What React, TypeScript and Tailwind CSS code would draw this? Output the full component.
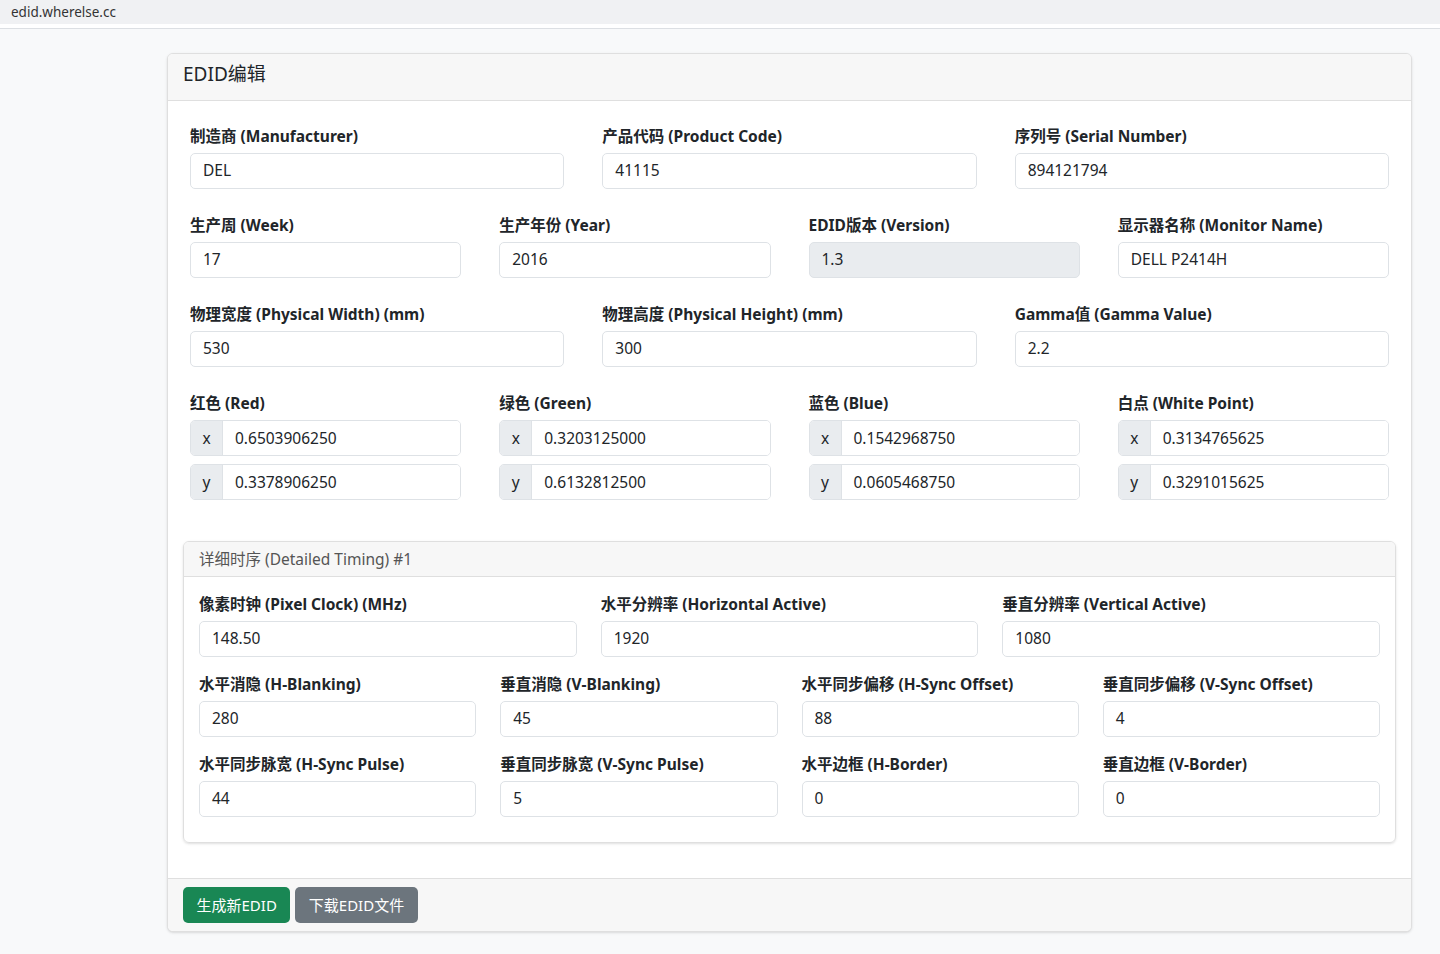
import React from "react";

const FONT = { fontFamily: '"Noto Sans", "Noto Sans CJK SC", sans-serif' };

function Field({ label, value, disabled }: { label: string; value: string; disabled?: boolean }) {
  return (
    <div className="flex flex-col">
      <div className="text-[15.5px] font-bold leading-[24px] mb-[5px] text-[#212529] whitespace-nowrap">{label}</div>
      <div
        className={`h-[36px] border border-[#dee2e6] rounded-[5px] px-3 flex items-center text-[15.5px] text-[#212529] ${
          disabled ? "bg-[#e9ecef]" : "bg-white"
        }`}
      >
        {value}
      </div>
    </div>
  );
}

function XY({ label, x, y }: { label: string; x: string; y: string }) {
  const Row = ({ k, v }: { k: string; v: string }) => (
    <div className="flex h-[36px] border border-[#dee2e6] rounded-[5px] overflow-hidden text-[15.5px] text-[#212529]">
      <div className="w-[32px] bg-[#e9ecef] border-r border-[#dee2e6] flex items-center justify-center">{k}</div>
      <div className="flex-1 bg-white px-3 flex items-center">{v}</div>
    </div>
  );
  return (
    <div className="flex flex-col">
      <div className="text-[15.5px] font-bold leading-[24px] mb-[5px] text-[#212529] whitespace-nowrap">{label}</div>
      <div className="flex flex-col gap-[8px]">
        <Row k="x" v={x} />
        <Row k="y" v={y} />
      </div>
    </div>
  );
}

export default function App() {
  return (
    <div className="min-h-screen bg-[#f8f9fa]" style={FONT}>
      <div className="h-[24px] bg-[#f0f1f3] flex items-center pl-[11px] text-[13.5px] text-[#333]">edid.wherelse.cc</div>
      <div className="h-[5px] bg-white border-b border-[#dcdfe3]" />
      <div className="pt-[24px] pb-[23px]">
        <div className="ml-[167px] w-[1245px] bg-white border border-[#dfdfdf] rounded-[6px] shadow-sm overflow-hidden">
          <div className="h-[47px] bg-[#f7f7f7] border-b border-[#dfdfdf] flex items-center px-[15px] pb-[5px] text-[19px] text-[#212529]">
            EDID编辑
          </div>
          <div className="px-[15px] pt-[22.5px] pb-[35px]">
            <div className="px-[7px] flex flex-col gap-[24.3px]">
              <div className="grid grid-cols-3 gap-x-[38px]">
                <Field label="制造商 (Manufacturer)" value="DEL" />
                <Field label="产品代码 (Product Code)" value="41115" />
                <Field label="序列号 (Serial Number)" value="894121794" />
              </div>
              <div className="grid grid-cols-4 gap-x-[38px]">
                <Field label="生产周 (Week)" value="17" />
                <Field label="生产年份 (Year)" value="2016" />
                <Field label="EDID版本 (Version)" value="1.3" disabled />
                <Field label="显示器名称 (Monitor Name)" value="DELL P2414H" />
              </div>
              <div className="grid grid-cols-3 gap-x-[38px]">
                <Field label="物理宽度 (Physical Width) (mm)" value="530" />
                <Field label="物理高度 (Physical Height) (mm)" value="300" />
                <Field label="Gamma值 (Gamma Value)" value="2.2" />
              </div>
              <div className="grid grid-cols-4 gap-x-[38px]">
                <XY label="红色 (Red)" x="0.6503906250" y="0.3378906250" />
                <XY label="绿色 (Green)" x="0.3203125000" y="0.6132812500" />
                <XY label="蓝色 (Blue)" x="0.1542968750" y="0.0605468750" />
                <XY label="白点 (White Point)" x="0.3134765625" y="0.3291015625" />
              </div>
            </div>

            <div className="mt-[41px] border border-[#dfdfdf] rounded-[6px] shadow-sm overflow-hidden">
              <div className="h-[35px] bg-[#f7f7f7] border-b border-[#dfdfdf] flex items-center px-[15px] text-[15.5px] text-[#555]">
                详细时序 (Detailed Timing) #1
              </div>
              <div className="px-[15px] pt-[14.5px] pb-[25px] flex flex-col gap-[15px]">
                <div className="grid grid-cols-3 gap-x-[24px]">
                  <Field label="像素时钟 (Pixel Clock) (MHz)" value="148.50" />
                  <Field label="水平分辨率 (Horizontal Active)" value="1920" />
                  <Field label="垂直分辨率 (Vertical Active)" value="1080" />
                </div>
                <div className="grid grid-cols-4 gap-x-[24px]">
                  <Field label="水平消隐 (H-Blanking)" value="280" />
                  <Field label="垂直消隐 (V-Blanking)" value="45" />
                  <Field label="水平同步偏移 (H-Sync Offset)" value="88" />
                  <Field label="垂直同步偏移 (V-Sync Offset)" value="4" />
                </div>
                <div className="grid grid-cols-4 gap-x-[24px]">
                  <Field label="水平同步脉宽 (H-Sync Pulse)" value="44" />
                  <Field label="垂直同步脉宽 (V-Sync Pulse)" value="5" />
                  <Field label="水平边框 (H-Border)" value="0" />
                  <Field label="垂直边框 (V-Border)" value="0" />
                </div>
              </div>
            </div>
          </div>
          <div className="h-[53px] bg-[#f7f7f7] border-t border-[#dfdfdf] flex items-center px-[15px] gap-[5px]">
            <button className="h-[36px] px-[13.5px] rounded-[5px] bg-[#198754] text-white text-[15px]">生成新EDID</button>
            <button className="h-[36px] px-[13.5px] rounded-[5px] bg-[#6c757d] text-white text-[15px]">下载EDID文件</button>
          </div>
        </div>
      </div>
    </div>
  );
}
